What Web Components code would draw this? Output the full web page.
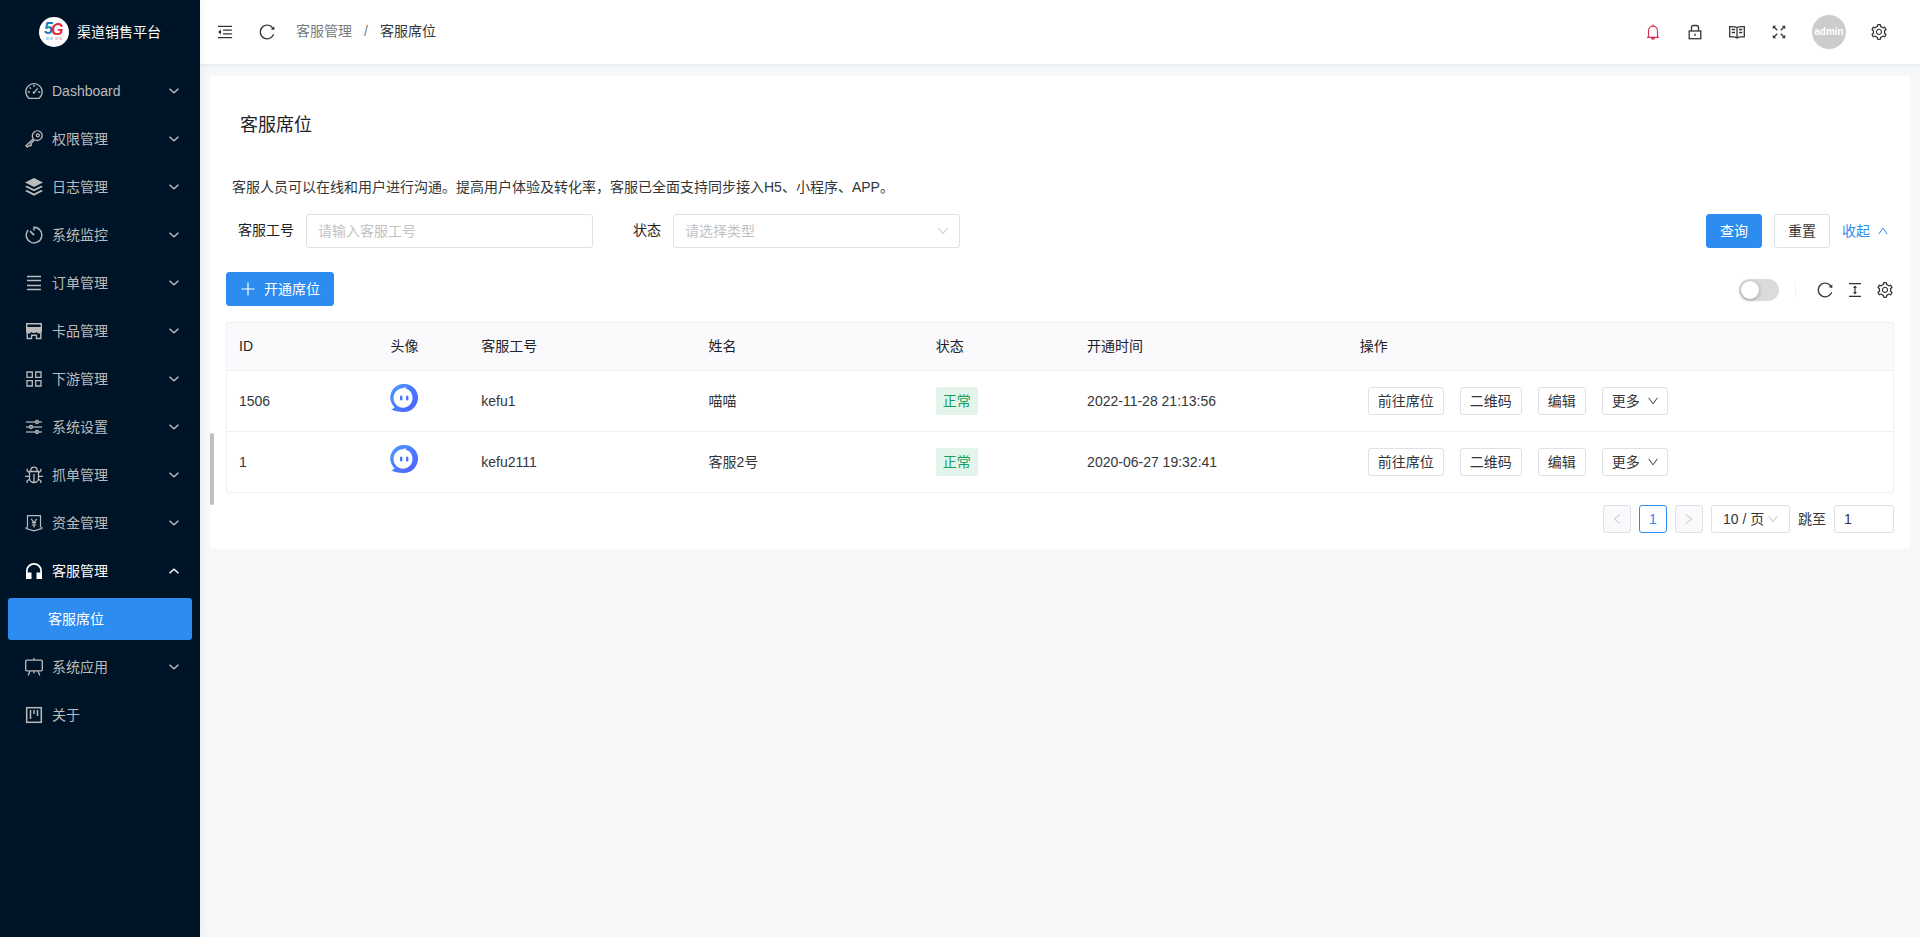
<!DOCTYPE html>
<html lang="zh-CN">
<head>
<meta charset="utf-8">
<title>客服席位 - 渠道销售平台</title>
<style>
  html, body { margin: 0; min-height: 100%; }
  body {
    font: 14px/22px "Liberation Sans", "Noto Sans CJK SC", sans-serif;
    color: #333639;
    background: #f5f7f9;
    --primary: #2d8cf0;
    --border: #e0e0e6;
    --line: #efeff5;
    --muted: #c2c2c2;
  }
</style>
</head>
<body>
<admin-app></admin-app>

<script>
const ICONS = {
  fold: ['64 64 896 896', '<path fill="currentColor" d="M408 442h480c4.400 0 8-3.600 8-8v-56c0-4.400-3.600-8-8-8H408c-4.400 0-8 3.600-8 8v56c0 4.400 3.600 8 8 8zm-8 204c0 4.400 3.600 8 8 8h480c4.400 0 8-3.600 8-8v-56c0-4.400-3.600-8-8-8H408c-4.400 0-8 3.600-8 8v56zm504-486H120c-4.400 0-8 3.600-8 8v56c0 4.400 3.600 8 8 8h784c4.400 0 8-3.600 8-8v-56c0-4.400-3.600-8-8-8zm0 632H120c-4.400 0-8 3.600-8 8v56c0 4.400 3.600 8 8 8h784c4.400 0 8-3.600 8-8v-56c0-4.400-3.600-8-8-8zM115.400 518.900L271.700 642c5.800 4.600 14.400.5 14.400-6.900V388.900c0-7.400-8.500-11.500-14.400-6.900L115.400 505.100a8.740 8.740 0 0 0 0 13.800z"/>'],
  reload: ['64 64 896 896', '<path fill="currentColor" d="M909.1 209.3l-56.4 44.1C775.8 155.1 656.2 92 521.9 92 290 92 102.3 279.5 102 511.5 101.7 743.7 289.8 932 521.9 932c181.3 0 335.8-115 394.6-276.1 1.5-4.2-.7-8.9-4.9-10.3l-56.7-19.5a8 8 0 0 0-10.1 4.8c-1.8 5-3.8 10-5.9 14.9-17.3 41-42.1 77.8-73.7 109.4A344.77 344.77 0 0 1 655.9 829c-42.3 17.9-87.4 27-133.8 27-46.5 0-91.5-9.1-133.8-27A341.5 341.5 0 0 1 279 755.2a342.16 342.16 0 0 1-73.7-109.4c-17.9-42.4-27-87.4-27-133.9s9.1-91.5 27-133.9c17.3-41 42.1-77.8 73.7-109.4 31.6-31.6 68.4-56.4 109.3-73.8 42.3-17.9 87.4-27 133.8-27 46.5 0 91.5 9.1 133.8 27a341.5 341.5 0 0 1 109.3 73.8c9.9 9.9 19.2 20.4 27.8 31.4l-60.2 47a8 8 0 0 0 3 14.1l175.6 43c5 1.2 9.9-2.6 9.9-7.7l.8-180.9c-.1-6.600-7.800-10.300-13-6.200z"/>'],
  setting: ['64 64 896 896', '<path fill="currentColor" d="M924.8 625.7l-65.5-56c3.1-19 4.7-38.4 4.7-57.8s-1.6-38.8-4.7-57.8l65.5-56a32.03 32.03 0 0 0 9.3-35.2l-.9-2.6a443.74 443.74 0 0 0-79.7-137.9l-1.8-2.1a32.12 32.12 0 0 0-35.1-9.5l-81.3 28.9c-30-24.6-63.5-44-99.7-57.6l-15.7-85a32.05 32.05 0 0 0-25.8-25.7l-2.7-.5c-52.1-9.4-106.900-9.400-159 0l-2.700.5a32.050 32.050 0 0 0-25.800 25.700l-15.800 85.400a351.860 351.860 0 0 0-99 57.400l-81.900-29.100a32 32 0 0 0-35.100 9.500l-1.800 2.100a446.020 446.020 0 0 0-79.700 137.900l-.9 2.600c-4.500 12.500-.8 26.500 9.300 35.200l66.300 56.600c-3.100 18.800-4.600 38-4.600 57.100 0 19.200 1.500 38.400 4.600 57.100L99 625.500a32.030 32.030 0 0 0-9.300 35.200l.9 2.600c18.100 50.400 44.900 96.900 79.700 137.900l1.800 2.100a32.120 32.120 0 0 0 35.100 9.500l81.900-29.100c29.800 24.500 63.100 43.900 99 57.400l15.800 85.400a32.050 32.050 0 0 0 25.800 25.700l2.700.5a449.400 449.400 0 0 0 159 0l2.700-.5a32.050 32.050 0 0 0 25.800-25.700l15.700-85a350 350 0 0 0 99.700-57.600l81.300 28.900a32 32 0 0 0 35.100-9.500l1.800-2.100c34.800-41.100 61.600-87.500 79.700-137.900l.9-2.600c4.500-12.300.8-26.300-9.300-35zM788.300 465.900c2.500 15.100 3.800 30.600 3.800 46.100s-1.300 31-3.800 46.100l-6.600 40.100 74.700 63.900a370.030 370.030 0 0 1-42.600 73.600L721 702.800l-31.400 25.800c-23.900 19.600-50.500 35-79.300 45.800l-38.100 14.300-17.900 97a377.500 377.500 0 0 1-85 0l-17.900-97.200-37.800-14.500c-28.500-10.800-55-26.200-78.700-45.700l-31.400-25.900-93.400 33.200c-17-22.900-31.200-47.600-42.600-73.600l75.500-64.500-6.500-40c-2.400-14.900-3.700-30.300-3.700-45.500 0-15.300 1.200-30.600 3.700-45.500l6.500-40-75.500-64.500c11.300-26.100 25.600-50.700 42.600-73.600l93.400 33.200 31.400-25.900c23.700-19.500 50.200-34.900 78.700-45.700l37.900-14.300 17.900-97.200c28.100-3.200 56.800-3.200 85 0l17.900 97 38.100 14.300c28.700 10.800 55.400 26.200 79.300 45.800l31.400 25.800 92.800-32.900c17 22.900 31.200 47.600 42.600 73.600L781.800 426l6.500 39.900zM512 326c-97.200 0-176 78.800-176 176s78.800 176 176 176 176-78.800 176-176-78.800-176-176-176zm79.200 255.200A111.600 111.600 0 0 1 512 614c-29.900 0-58-11.700-79.200-32.800A111.600 111.600 0 0 1 400 502c0-29.900 11.700-58 32.800-79.200C454 401.600 482.100 390 512 390c29.900 0 58 11.600 79.200 32.800A111.600 111.600 0 0 1 624 502c0 29.900-11.700 58-32.800 79.200z"/>'],
  dashboard: ['0 0 18 18', '<g fill="none" stroke="currentColor" stroke-width="1.300"><path d="M4 16.400a8.200 8.200 0 1 1 10 0z" stroke-linejoin="round"/><path d="M9 3v2M2.800 10h2M13.200 10h2M4.600 5.400l1.300 1.300M9 10.700l3.800-4.400"/></g><circle cx="8.900" cy="10.600" r="1.200" fill="currentColor"/>'],
  key: ['0 0 18 18', '<g fill="none" stroke="currentColor" stroke-width="1.300" stroke-linejoin="round"><path d="M8.200 9C6.900 6.500 7.200 3.900 9 2.200c2-1.800 5-1.800 6.800 0s1.900 4.800 0 6.700c-1.700 1.600-4.200 2-6.200.9L5.600 13.800l.9 1.100-1.300 1.200-1-.8-1.800 1.800L.9 15.700z"/><circle cx="12.800" cy="5.300" r="1.500"/></g>'],
  layers: ['0 0 18 18', '<g fill="currentColor"><path d="M9 0l9 4.500L9 9 0 4.500z"/><path d="M2 7.700L9 11.200l7-3.500 2 1L9 13.300 0 8.700z"/><path d="M2 12L9 15.500 16 12l2 1-9 4.800L0 13z"/></g>'],
  timer: ['0 0 18 18', '<g fill="none" stroke="currentColor" stroke-width="1.400"><path d="M9 4.500V1.300a7.800 7.800 0 1 1-5.800 2.600"/><path d="M5 5l4 4.200" stroke-width="1.700"/></g>'],
  list: ['0 0 18 18', '<path d="M2 2.500h14M2 6.500h14M2 11.500h14M2 15.500h14" stroke="currentColor" stroke-width="1.300"/>'],
  shop: ['0 0 18 18', '<path fill="none" stroke="currentColor" stroke-width="1.400" d="M1.700 1.700h14.600v4H1.700zM2.200 9.500v7h4.400v-3.300h4.800v3.300h4.400v-7"/><path fill="currentColor" d="M1 5h16v4a2.800 2.800 0 0 1-5.300 1A2.900 2.900 0 0 1 9 11a2.900 2.900 0 0 1-2.700-1A2.800 2.800 0 0 1 1 9z"/>'],
  grid: ['0 0 18 18', '<path fill="none" stroke="currentColor" stroke-width="1.300" d="M2 2h5.300v5.300H2zM10.700 2H16v5.300h-5.300zM2 10.700h5.300V16H2zM10.700 10.700H16V16h-5.300z"/>'],
  sliders: ['0 0 18 18', '<g fill="none" stroke="currentColor" stroke-width="1.500"><path d="M1 4h9.700M13.300 4H17M1 9h3.500M7.500 9H17M1 14h9.700M13.300 14H17" opacity=".8"/><circle cx="12" cy="4" r="1.400"/><circle cx="6" cy="9" r="1.400"/><circle cx="12" cy="14" r="1.400"/></g>'],
  bug: ['0 0 18 18', '<g fill="none" stroke="currentColor" stroke-width="1.300"><path d="M4.500 5.500h9V12a4.500 4.500 0 0 1-9 0zM5.800 5.500V4.400a3.200 3.200 0 0 1 6.400 0v1.100M9 8v8M0 10.300h4.500M13.500 10.300H18M2.200 2.800V5l2.300 1.700M15.800 2.800V5l-2.300 1.700M2.200 17v-2.200l2.300-1.600M15.800 17v-2.200l-2.300-1.600"/></g>'],
  money: ['0 0 18 18', '<g fill="none" stroke="currentColor" stroke-width="1.200"><path d="M2.500 13.500V1.600h13v11.900M1.200 13v1.500L9 16.800l7.800-2.300V13M6.200 4.800L9 8.500l2.800-3.700M9 8.500v5M6.800 8.700h4.400M6.800 11h4.400"/></g>'],
  headset: ['0 0 18 18', '<path fill="currentColor" d="M1 17V9a8 8 0 0 1 16 0v8h-5.500v-6.500h3.700V9A6.200 6.200 0 0 0 2.800 9v1.500h3.700V17z"/>'],
  board: ['0 0 18 18', '<g fill="none" stroke="currentColor" stroke-width="1.300"><rect x=".7" y="2.200" width="16.600" height="10.600" rx="1"/><path d="M9 0v2M9 13v2.500M5 13l-1.800 4.500M13 13l1.800 4.500"/></g>'],
  about: ['0 0 18 18', '<g fill="none" stroke="currentColor" stroke-width="1.500"><rect x="1.700" y="1.700" width="14.600" height="14.600"/><path d="M5.500 4v9M9 4v4M12.500 4v6"/></g>'],
  bell: ['0 0 16 16', '<g fill="none" stroke="currentColor" stroke-width="1.200"><path d="M8 .5V2M3.500 13.200V6.600a4.500 4.500 0 0 1 9 0v6.600M2 13.400h12"/></g><path fill="currentColor" d="M6 14h4a2 1.700 0 0 1-4 0z"/>'],
  lock: ['0 0 16 16', '<g fill="none" stroke="currentColor" stroke-width="1.300"><rect x="2.200" y="7" width="11.600" height="7.700"/><path d="M4.500 7V3.500q0-2 2-2h3q2 0 2 2V7M8 9.500v2.500"/></g>'],
  book: ['0 0 16 16', '<g fill="none" stroke="currentColor" stroke-width="1.300"><path d="M8 3.500Q6 2.500 3 2.600H.7v10.300H4q2.500 0 4 1.200 1.500-1.200 4-1.200h3.300V2.600H13Q10 2.500 8 3.500zv10.500M2.700 5.500h3.300M2.700 8.500h3.300M10 5.500h3.300M10 8.500h3.300"/></g>'],
  expand: ['0 0 16 16', '<path fill="none" stroke="currentColor" stroke-width="1.300" d="M2.500 2.500l3.700 3.700M13.500 2.500L9.800 6.200M2.500 13.500l3.700-3.700M13.500 13.500L9.800 9.800"/><path fill="currentColor" d="M1.800 1.800h3.400L1.800 5.200zM14.200 1.800v3.400l-3.400-3.400zM1.800 14.200v-3.400l3.400 3.400zM14.200 14.200h-3.400l3.400-3.400z"/>'],
  height: ['0 0 16 16', '<path d="M2 1.600h12M2 14.400h12" stroke="currentColor" stroke-width="1.300"/><path d="M8 5v6" stroke="currentColor" stroke-width="1.200"/><path d="M6 6l2-2.600L10 6zM6 10l2 2.600L10 10z" fill="currentColor"/>'],
  plus: ['0 0 16 16', '<path d="M8 1.500v13M1.500 8h13" stroke="currentColor" stroke-width="1.200"/>'],
  chevron: ['0 0 10 10', '<path d="M.5 2.800L5 6.800l4.500-4" fill="none" stroke="currentColor" stroke-width="1.400"/>'],
  thin: ['0 0 10 10', '<path d="M.6 1.800L5 7.800l4.400-6" fill="none" stroke="currentColor" stroke-width="1"/>'],
};

function define(name, html, setup) {
  const template = document.createElement('template');
  template.innerHTML = html;
  customElements.define(name, class extends HTMLElement {
    connectedCallback() {
      if (this.shadowRoot) return;
      this.attachShadow({ mode: 'open' }).append(template.content.cloneNode(true));
      if (setup) setup(this, this.shadowRoot);
    }
  });
}

define('ui-icon', `
  <style>
    :host { display: inline-flex; flex: none; width: 16px; height: 16px; }
    :host([flip]) { transform: rotate(180deg); }
    :host([turn="left"]) { transform: rotate(90deg); }
    :host([turn="right"]) { transform: rotate(-90deg); }
    svg { width: 100%; height: 100%; }
  </style>
  <svg aria-hidden="true"></svg>`, (el, root) => {
  const [box, body] = ICONS[el.getAttribute('name')];
  const svg = root.querySelector('svg');
  svg.setAttribute('viewBox', box);
  svg.innerHTML = body;
});

define('ui-button', `
  <style>
    :host { display: inline-flex; }
    button {
      display: flex; align-items: center; justify-content: center; gap: 8px;
      box-sizing: border-box; height: 34px; padding: 0 13px;
      font: inherit; line-height: 20px; color: inherit; white-space: nowrap;
      background: #fff; border: 1px solid var(--border); border-radius: 3px; cursor: pointer;
    }
    :host([small]) button { height: 28px; padding: 0 9px; }
    :host([primary]) button { color: #fff; background: var(--primary); border-color: var(--primary); }
    :host([square]) button { width: 28px; padding: 0; }
    :host([current]) button { color: var(--primary); border-color: var(--primary); }
    :host([disabled]) button { color: var(--muted); background: #fafafc; cursor: default; }
  </style>
  <button type="button"><slot></slot></button>`, (el, root) => {
  const button = root.querySelector('button');
  button.disabled = el.hasAttribute('disabled');
  if (el.hasAttribute('label')) button.setAttribute('aria-label', el.getAttribute('label'));
});

define('ui-icon-button', `
  <style>
    :host { display: inline-flex; }
    button { display: flex; padding: 0; border: 0; background: none; color: inherit; cursor: pointer; }
  </style>
  <button type="button"><slot></slot></button>`, (el, root) => {
  root.querySelector('button').setAttribute('aria-label', el.getAttribute('label'));
});

define('menu-item', `
  <style>
    :host { display: block; margin-top: 6px; color: #bbb; }
    a {
      display: flex; align-items: center; box-sizing: border-box; height: 42px;
      margin: 0 8px; padding: 0 13px 0 17px; gap: 9px;
      color: inherit; text-decoration: none; border-radius: 3px;
    }
    span { flex: 1; }
    .glyph { width: 18px; height: 18px; }
    .arrow { width: 10px; height: 10px; }
    :host([open]), :host([selected]) { color: #fff; }
    :host([selected]) a { padding-left: 40px; background: var(--primary); }
  </style>
  <a href="#"><span><slot></slot></span></a>`, (el, root) => {
  const link = root.querySelector('a');
  if (el.hasAttribute('icon'))
    link.insertAdjacentHTML('afterbegin', `<ui-icon class="glyph" name="${el.getAttribute('icon')}"></ui-icon>`);
  if (el.hasAttribute('group'))
    link.insertAdjacentHTML('beforeend', `<ui-icon class="arrow" name="chevron" ${el.hasAttribute('open') ? 'flip' : ''}></ui-icon>`);
  if (el.hasAttribute('selected')) link.setAttribute('aria-current', 'page');
});

define('brand-logo', `
  <style>
    :host { display: flex; align-items: center; justify-content: center; gap: 8px; height: 64px; color: #fff; }
    svg { width: 30px; height: 30px; }
    text { font: italic bold 16px "Liberation Sans", sans-serif; }
  </style>
  <svg viewBox="0 0 30 30" aria-hidden="true">
    <circle cx="15" cy="15" r="15" fill="#fff"/>
    <text x="5" y="17" fill="#1b7fc4">5</text>
    <text x="12" y="18" fill="#e0303c">G</text>
    <g opacity=".5"><path d="M7 20h3v3H7zM11 20h3v3h-3z" fill="#6db3dc"/><path d="M16 20h3v3h-3zM20 20h3v3h-3z" fill="#e88a92"/></g>
  </svg>
  <slot></slot>`);

define('side-bar', `
  <style>
    :host { display: block; flex: none; width: 200px; background: #001428; box-shadow: 2px 0 8px rgba(29, 35, 41, .05); position: relative; }
  </style>
  <brand-logo>渠道销售平台</brand-logo>
  <nav aria-label="主菜单">
    <menu-item icon="dashboard" group>Dashboard</menu-item>
    <menu-item icon="key" group>权限管理</menu-item>
    <menu-item icon="layers" group>日志管理</menu-item>
    <menu-item icon="timer" group>系统监控</menu-item>
    <menu-item icon="list" group>订单管理</menu-item>
    <menu-item icon="shop" group>卡品管理</menu-item>
    <menu-item icon="grid" group>下游管理</menu-item>
    <menu-item icon="sliders" group>系统设置</menu-item>
    <menu-item icon="bug" group>抓单管理</menu-item>
    <menu-item icon="money" group>资金管理</menu-item>
    <menu-item icon="headset" group open>客服管理</menu-item>
    <menu-item selected>客服席位</menu-item>
    <menu-item icon="board" group>系统应用</menu-item>
    <menu-item icon="about">关于</menu-item>
  </nav>`);

define('top-bar', `
  <style>
    :host { display: flex; align-items: center; justify-content: space-between; height: 64px; background: #fff; box-shadow: 0 1px 4px rgba(0, 21, 41, .08); }
    .left { display: flex; align-items: center; gap: 26px; padding-left: 17px; }
    .right { display: flex; align-items: center; gap: 26px; padding-right: 33px; }
    nav { display: flex; gap: 12px; margin-left: -5px; line-height: 24px; padding-bottom: 2px; }
    a { color: #767c82; text-decoration: none; }
    a[aria-current] { color: #333639; }
    .sep { color: #767c82; }
    .bell { color: #d9304f; }
    .avatar {
      display: flex; align-items: center; justify-content: center; width: 34px; height: 34px; margin: 0 -1px;
      border-radius: 50%; background: #ccc; color: #fff; font-size: 10px; font-weight: bold;
    }
  </style>
  <div class="left">
    <ui-icon-button label="折叠菜单"><ui-icon name="fold"></ui-icon></ui-icon-button>
    <ui-icon-button label="刷新页面"><ui-icon name="reload"></ui-icon></ui-icon-button>
    <nav aria-label="面包屑"><a href="#">客服管理</a><span class="sep">/</span><a href="#" aria-current="page">客服席位</a></nav>
  </div>
  <div class="right">
    <ui-icon-button class="bell" label="通知"><ui-icon name="bell"></ui-icon></ui-icon-button>
    <ui-icon-button label="锁屏"><ui-icon name="lock"></ui-icon></ui-icon-button>
    <ui-icon-button label="文档"><ui-icon name="book"></ui-icon></ui-icon-button>
    <ui-icon-button label="全屏"><ui-icon name="expand"></ui-icon></ui-icon-button>
    <span class="avatar">admin</span>
    <ui-icon-button label="项目配置"><ui-icon name="setting"></ui-icon></ui-icon-button>
  </div>`);

define('search-form', `
  <style>
    :host { display: block; }
    form { display: grid; grid-template-columns: 22% 22% 1fr; align-items: center; }
    .field { display: grid; grid-template-columns: 80px 1fr; align-items: center; }
    label { padding-right: 12px; text-align: right; color: #1f2225; padding-bottom: 2px; }
    input, select {
      box-sizing: border-box; width: 100%; height: 34px; padding: 0 11px;
      font: inherit; color: inherit; background: #fff; border: 1px solid var(--border); border-radius: 3px;
      appearance: none;
    }
    input::placeholder { color: var(--muted); opacity: 1; }
    select { grid-area: 1 / 1; color: var(--muted); }
    .pick { display: grid; align-items: center; }
    .pick ui-icon { grid-area: 1 / 1; justify-self: end; width: 10px; height: 10px; margin-right: 12px; color: var(--muted); pointer-events: none; }
    .actions { display: flex; align-items: center; justify-content: flex-end; gap: 12px; padding-right: 6px; }
    a { display: flex; align-items: center; gap: 8px; color: var(--primary); text-decoration: none; }
    a ui-icon { width: 10px; height: 10px; }
  </style>
  <form>
    <div class="field"><label for="no">客服工号</label><input id="no" placeholder="请输入客服工号"></div>
    <div class="field"><label for="state">状态</label>
      <div class="pick"><select id="state"><option>请选择类型</option></select><ui-icon name="thin"></ui-icon></div>
    </div>
    <div class="actions">
      <ui-button primary>查询</ui-button><ui-button>重置</ui-button>
      <a href="#">收起<ui-icon name="thin" flip></ui-icon></a>
    </div>
  </form>`);

define('table-tools', `
  <style>
    :host { display: flex; align-items: center; justify-content: space-between; }
    .tools { display: flex; align-items: center; gap: 14px; padding: 2px 1px 0 0; }
    .switch { appearance: none; width: 40px; height: 22px; margin: 0 2px 0 0; border-radius: 11px; background: #dbdbdb; cursor: pointer; }
    .switch::before { content: ""; display: block; width: 18px; height: 18px; margin: 2px; border-radius: 50%; background: #fff; box-shadow: 0 1px 4px rgba(0, 0, 0, .3); }
    .split { width: 1px; height: 16px; margin-right: 7px; background: var(--line); }
  </style>
  <ui-button primary><ui-icon name="plus"></ui-icon>开通席位</ui-button>
  <div class="tools">
    <input class="switch" type="checkbox" role="switch" aria-label="表格斑马纹">
    <span class="split"></span>
    <ui-icon-button label="刷新"><ui-icon name="reload"></ui-icon></ui-icon-button>
    <ui-icon-button label="密度"><ui-icon name="height"></ui-icon></ui-icon-button>
    <ui-icon-button label="列设置"><ui-icon name="setting"></ui-icon></ui-icon-button>
  </div>`);

define('bot-avatar', `
  <style>
    :host { display: block; width: 28px; height: 28px; padding-bottom: 6px; }
  </style>
  <svg width="28" height="28" viewBox="0 0 28 28" role="img" aria-label="头像">
    <defs><linearGradient id="g" x1="0" y1="0" x2="1" y2="1"><stop stop-color="#4a9bff"/><stop offset="1" stop-color="#4c5cff"/></linearGradient></defs>
    <path fill="url(#g)" d="M14.500 0A13.500 13.500 0 0 1 28 13.500C28 22 21.500 28 13.500 28c-5 0-9.500-.8-12.500-3 1.800-.1 3-.7 3.600-1.600A13.500 13.500 0 0 1 14.500 0z"/>
    <path fill="#fff" d="M14.500 3.800q-1.200.4-1.500 1.200 1.500-2 3.700-2.200l-1.500 1.600A9.500 9.800 0 1 1 12 4.200q1.200-.5 2.500-.4z"/>
    <rect x="10" y="11.500" width="2.400" height="5" rx="1.200" fill="#4a78f5"/><rect x="16" y="11.500" width="2.400" height="5" rx="1.200" fill="#4a78f5"/>
  </svg>`);

define('status-tag', `
  <style>
    :host { display: inline-block; height: 28px; padding: 0 7px; line-height: 28px; border-radius: 2px; color: #18a058; background: #e3f4eb; vertical-align: middle; }
  </style>
  <slot></slot>`);

define('seat-table', `
  <style>
    :host { display: block; border: 1px solid var(--line); border-radius: 3px; overflow: hidden; }
    table { width: 100%; table-layout: fixed; border-collapse: separate; border-spacing: 0; }
    th, td { box-sizing: border-box; padding: 0 12px; text-align: left; border-bottom: 1px solid var(--line); }
    th { height: 48px; padding-bottom: 2px; font-weight: normal; color: #1f2225; background: #fafafc; }
    td { height: 61px; }
    tbody tr:last-child td { height: 60px; border-bottom: 0; }
    .actions { display: flex; gap: 16px; padding-left: 8px; }
    .actions ui-icon { width: 10px; height: 10px; }
    .w60 { width: 60px; } .w100 { width: 100px; } .w150 { width: 150px; } .w180 { width: 180px; } .w360 { width: 360px; }
  </style>
  <table>
    <colgroup><col class="w100"><col class="w60"><col class="w150"><col class="w150"><col class="w100"><col class="w180"><col class="w360"></colgroup>
    <thead><tr><th>ID</th><th>头像</th><th>客服工号</th><th>姓名</th><th>状态</th><th>开通时间</th><th>操作</th></tr></thead>
    <tbody></tbody>
  </table>`, (el, root) => {
  const rows = [
    ['1506', 'kefu1', '喵喵', '2022-11-28 21:13:56'],
    ['1', 'kefu2111', '客服2号', '2020-06-27 19:32:41'],
  ];
  root.querySelector('tbody').innerHTML = rows.map(([id, no, name, time]) => `
    <tr><td>${id}</td><td><bot-avatar></bot-avatar></td><td>${no}</td><td>${name}</td>
    <td><status-tag>正常</status-tag></td><td>${time}</td>
    <td><div class="actions"><ui-button small>前往席位</ui-button><ui-button small>二维码</ui-button><ui-button small>编辑</ui-button><ui-button small>更多<ui-icon name="thin"></ui-icon></ui-button></div></td></tr>`).join('');
});

define('page-nav', `
  <style>
    :host { display: flex; align-items: center; justify-content: flex-end; gap: 8px; }
    ui-icon { width: 10px; height: 10px; }
    input, select {
      box-sizing: border-box; height: 28px; font: inherit; line-height: 20px; color: inherit;
      background: #fff; border: 1px solid var(--border); border-radius: 3px; appearance: none;
    }
    input { width: 60px; padding: 0 9px; }
    .size { display: grid; align-items: center; }
    select { grid-area: 1 / 1; width: 79px; padding: 0 11px; }
    .size ui-icon { grid-area: 1 / 1; justify-self: end; margin-right: 12px; color: var(--muted); pointer-events: none; }
    label { display: flex; align-items: center; gap: 8px; }
  </style>
  <ui-button small square disabled label="上一页"><ui-icon name="thin" turn="left"></ui-icon></ui-button>
  <ui-button small square current>1</ui-button>
  <ui-button small square disabled label="下一页"><ui-icon name="thin" turn="right"></ui-icon></ui-button>
  <div class="size"><select aria-label="每页条数"><option>10 / 页</option></select><ui-icon name="thin"></ui-icon></div>
  <label>跳至<input value="1"></label>`);

define('seat-page', `
  <style>
    :host { display: block; position: relative; margin: 12px 10px; padding: 0 16px 16px; background: #fff; border-radius: 3px; }
    h1 { margin: 0; padding: 32px 14px 34px; font-size: 18px; line-height: 34px; font-weight: normal; color: #1f2225; }
    p { margin: 0 0 16px; padding: 0 6px; }
    search-form { margin-bottom: 24px; }
    table-tools { margin-bottom: 16px; }
    seat-table { margin-bottom: 12px; }
    .handle { position: absolute; left: 0; top: 357px; width: 4px; height: 72px; border-radius: 2px; background: #bfbfbf; }
  </style>
  <h1>客服席位</h1>
  <p>客服人员可以在线和用户进行沟通。提高用户体验及转化率，客服已全面支持同步接入H5、小程序、APP。</p>
  <search-form></search-form>
  <table-tools></table-tools>
  <seat-table></seat-table>
  <page-nav></page-nav>
  <div class="handle"></div>`);

define('admin-app', `
  <style>
    :host { display: flex; min-height: 100vh; }
    main { flex: 1; min-width: 0; }
  </style>
  <side-bar></side-bar>
  <main><top-bar></top-bar><seat-page></seat-page></main>`);
</script>
</body>
</html>
